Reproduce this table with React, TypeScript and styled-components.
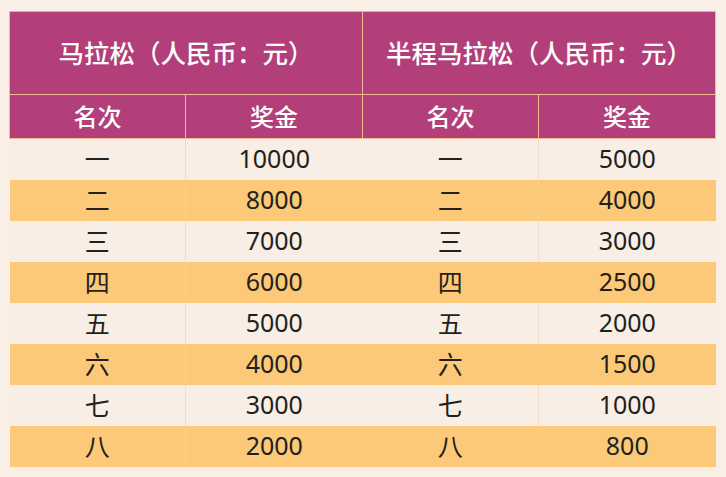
import React from "react";
import styled, { createGlobalStyle } from "styled-components";

const rows = [
    ["一", "10000", "一", "5000"],
    ["二", "8000", "二", "4000"],
    ["三", "7000", "三", "3000"],
    ["四", "6000", "四", "2500"],
    ["五", "5000", "五", "2000"],
    ["六", "4000", "六", "1500"],
    ["七", "3000", "七", "1000"],
    ["八", "2000", "八", "800"],
];

const GlobalStyle = createGlobalStyle`
    html, body {
        margin: 0;
        padding: 0;
        background: #f9efe6;
        font-family: "Noto Sans CJK SC", "Noto Sans", sans-serif;
    }
`;

const App = () => {
    return (
        <Page>
            <GlobalStyle />
            <Table>
                <colgroup>
                    <col style={{ width: 176 }} />
                    <col style={{ width: 177 }} />
                    <col style={{ width: 176 }} />
                    <col style={{ width: 177 }} />
                </colgroup>
                <thead>
                    <tr>
                        <Title colSpan={2}>马拉松（人民币：元）</Title>
                        <Title colSpan={2}>半程马拉松（人民币：元）</Title>
                    </tr>
                    <tr>
                        <Head>名次</Head>
                        <Head>奖金</Head>
                        <Head>名次</Head>
                        <Head>奖金</Head>
                    </tr>
                </thead>
                <tbody>
                    {rows.map((row, i) => (
                        <Row key={i} $striped={i % 2 === 1}>
                            {row.map((cell, j) => (
                                <Cell key={j}>{cell}</Cell>
                            ))}
                        </Row>
                    ))}
                </tbody>
            </Table>
        </Page>
    );
};

const Page = styled.div`
    width: 726px;
    height: 477px;
    padding: 11px 0 0 9px;
    box-sizing: border-box;
    background: #f9efe6;
`;

const Table = styled.table`
    width: 706px;
    border-collapse: collapse;
    table-layout: fixed;
`;

const Title = styled.th`
    box-sizing: border-box;
    height: 83px;
    padding: 0 0 4px;
    background: #b23f79;
    color: #fff;
    font-size: 25.5px;
    font-weight: 500;
    text-align: center;
    border: 1px solid #f3b995;
    border-top-color: #f0a98f;
`;

const Head = styled.th`
    box-sizing: border-box;
    height: 44px;
    padding: 0 0 3px;
    background: #b23f79;
    color: #fff;
    font-size: 24px;
    font-weight: 500;
    text-align: center;
    border: 1px solid #f3b995;
`;

const Row = styled.tr<{ $striped: boolean }>`
    background: ${({ $striped }) => ($striped ? "#fcc978" : "#f8eee5")};

    td {
        border-left: 1px solid ${({ $striped }) => ($striped ? "#fbcf8a" : "#f3dcc3")};
    }

    td:first-child,
    td:nth-child(3) {
        border-left: none;
    }
`;

const Cell = styled.td`
    box-sizing: border-box;
    height: 41px;
    padding: 0 0 2px;
    text-align: center;
    color: #231f1c;
    font-size: 25px;
    font-family: "Noto Sans", "Noto Sans CJK SC", sans-serif;
`;

export default App;
